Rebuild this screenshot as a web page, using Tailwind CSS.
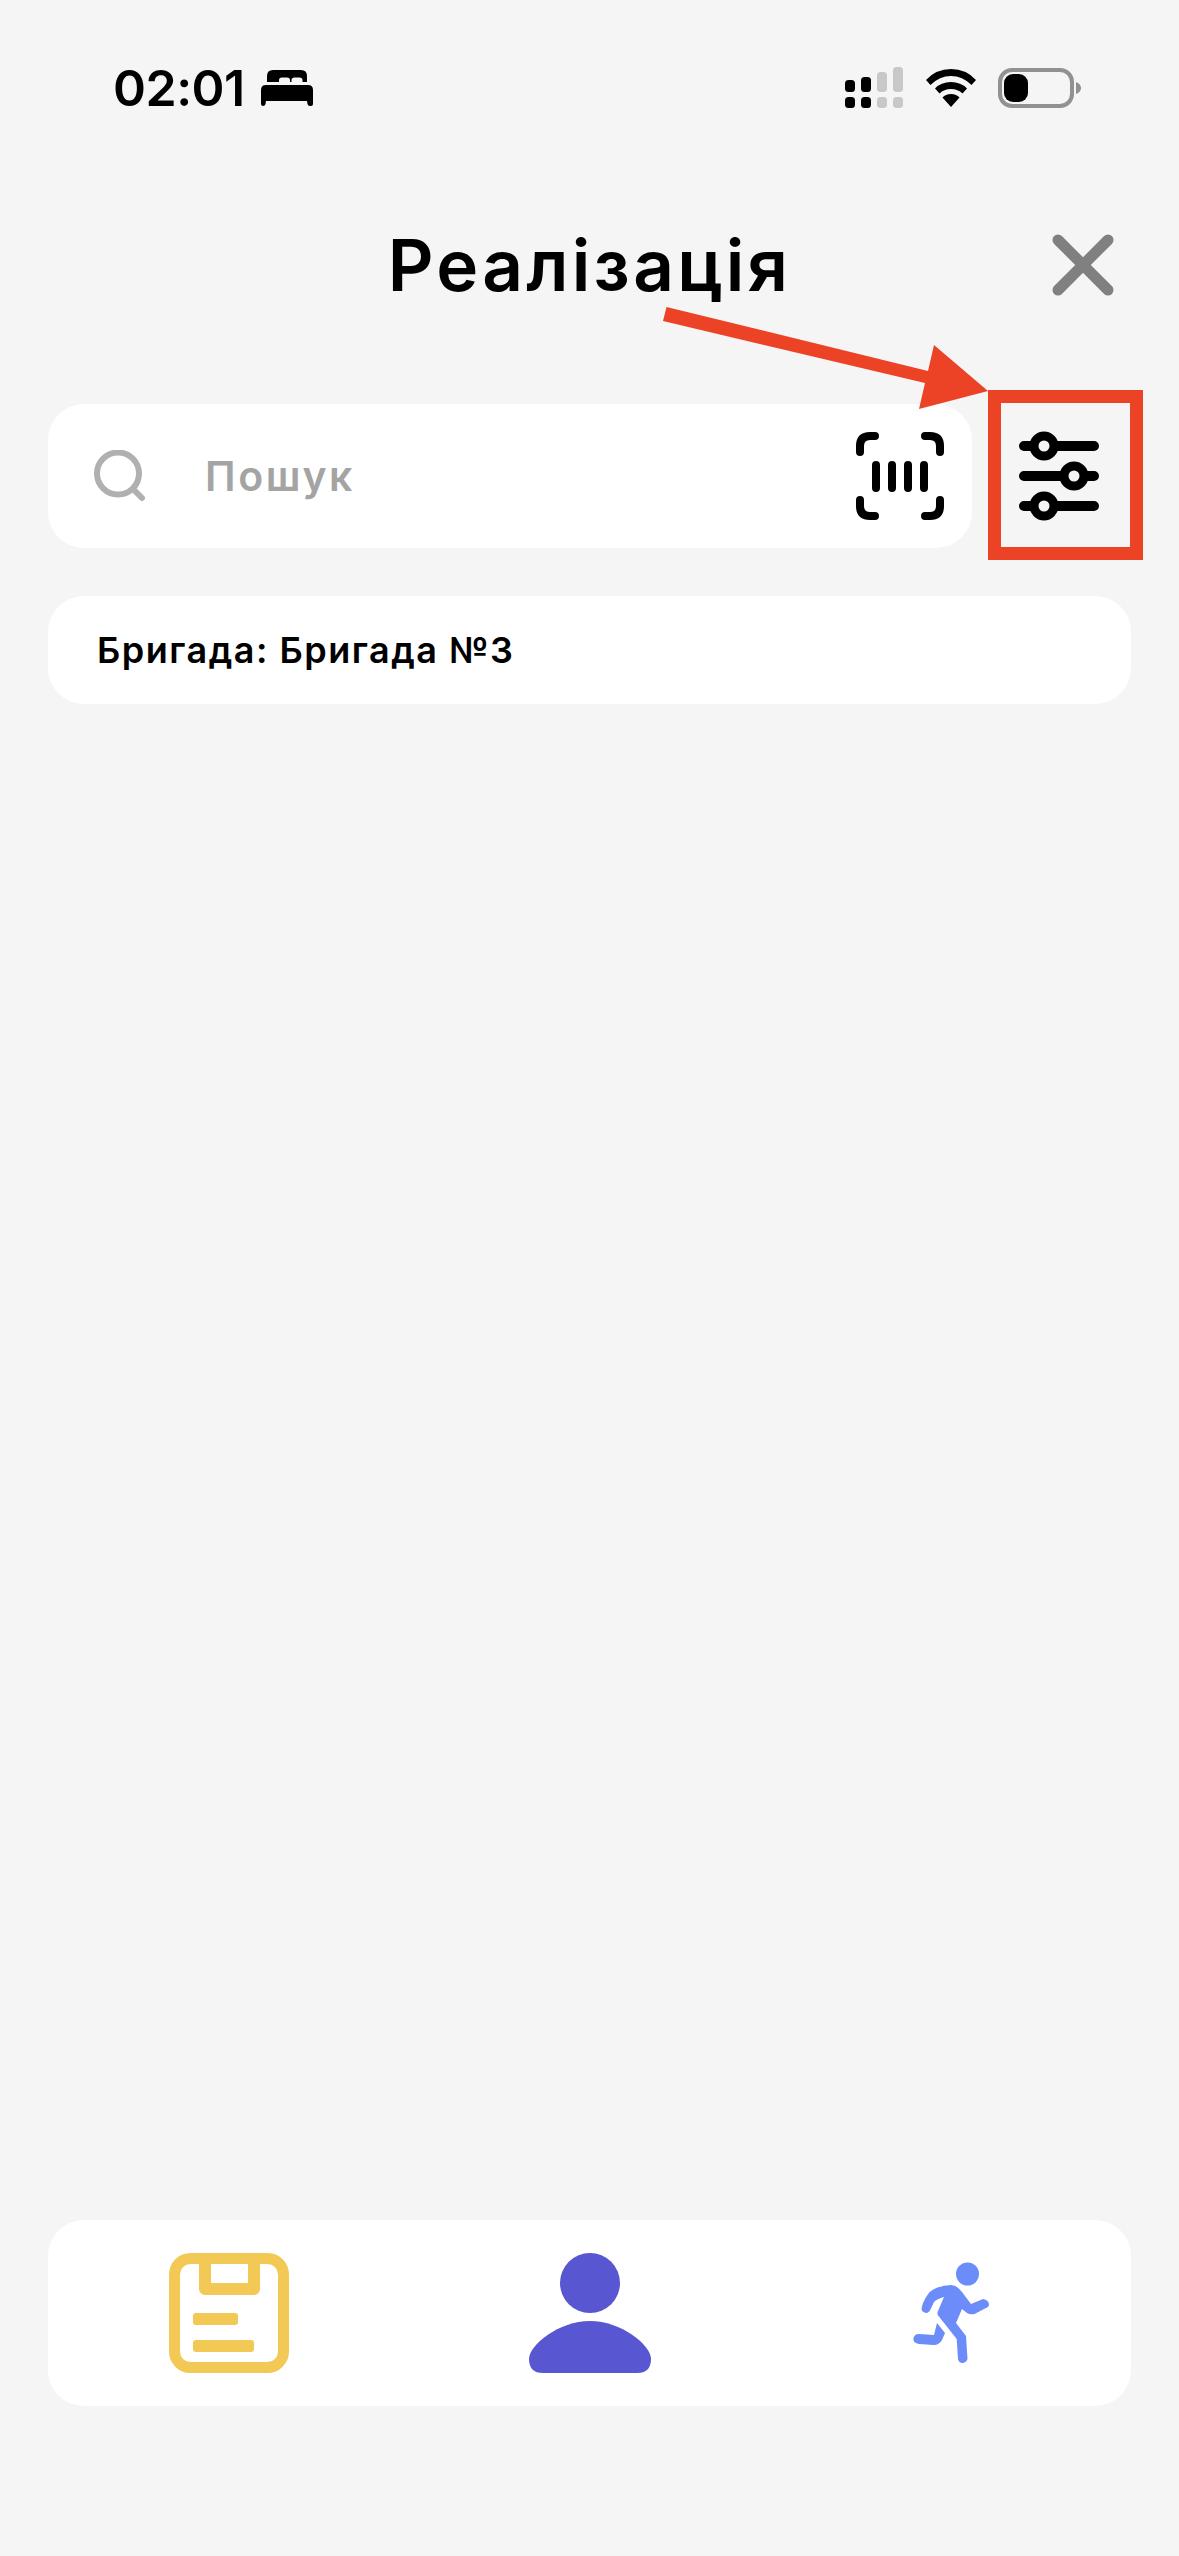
<!DOCTYPE html>
<html lang="uk">
<head>
<meta charset="utf-8">
<script src="https://cdn.jsdelivr.net/npm/@tailwindcss/browser@4"></script>
</head>
<body class="bg-[#f5f5f5]">
<div class="relative w-[1179px] h-[2556px] overflow-hidden flex flex-col bg-[#f5f5f5] font-['Inter',sans-serif] text-black">

  <!-- status bar -->
  <div class="h-[67px]"></div>
  <div class="h-[42px] flex items-center pl-[113px] pr-[98px]">
    <span class="text-[50px] leading-[42px] font-semibold tracking-[-0.5px]">02:01</span>
    <svg class="ml-[16px]" width="52" height="36" viewBox="0 0 52 36"><path fill="#000" d="M6 12V6q0-6 6-6h28q6 0 6 6v6h-4.500V10q0-2.500-3-2.500h-5q-3 0-3 2.500v2h-1.500V10q0-2.500-3-2.500h-5q-3 0-3 2.500v2zM5 15h42q5 0 5 5v14q0 2-2 2h-1q-2 0-2.500-2l-.500-3H5l-.500 3Q4 36 2 36H2q-2 0-2-2V20q0-5 5-5z"/></svg>
    <div class="flex-1"></div>
    <svg width="60" height="42" viewBox="0 0 60 42">
      <g fill="#000"><rect x="2" y="13" width="10" height="12" rx="3.500"/><rect x="18" y="10" width="10" height="15" rx="3.500"/><rect x="2" y="30" width="10" height="11" rx="3.500"/><rect x="18" y="30" width="10" height="11" rx="3.500"/></g>
      <g fill="#c8c8c8"><rect x="34" y="5" width="10" height="20" rx="3.500"/><rect x="50" y="0" width="10" height="25" rx="3.500"/><rect x="34" y="30" width="10" height="11" rx="3.500"/><rect x="50" y="30" width="10" height="11" rx="3.500"/></g>
    </svg>
    <svg class="ml-[23px]" width="50" height="38" viewBox="0 0 50 38"><path fill="#000" d="M25 0Q40 0 50 11l-4.500 5Q36.500 7 25 7 13.500 7 4.500 16L0 11Q10 0 25 0zM25 13q10 0 16 6.500l-4.500 5Q32 20 25 20q-7 0-11.500 4.500L9 19.500Q15 13 25 13zM25 25q5.500 0 8.500 3.500L25 38l-8.500-9.500Q19.500 25 25 25z"/></svg>
    <svg class="ml-[22px]" width="83" height="40" viewBox="0 0 83 40">
      <rect x="2" y="2" width="72" height="36" rx="12" fill="none" stroke="#919191" stroke-width="4"/>
      <rect x="6" y="6" width="24" height="28" rx="9" fill="#000"/>
      <path fill="#919191" d="M78 14q5 2 5 6t-5 6z"/>
    </svg>
  </div>

  <!-- header -->
  <div class="mt-[118px] h-[76px] px-[65px] grid grid-cols-[1fr_auto_1fr] items-center">
    <div></div>
    <h1 class="text-[71px] leading-[76px] font-semibold tracking-[3.300px]">Реалізація</h1>
    <div class="flex justify-end">
      <svg width="62" height="62" viewBox="0 0 62 62"><path d="M6 6 56 56M56 6 6 56" fill="none" stroke="#808080" stroke-width="11" stroke-linecap="round"/></svg>
    </div>
  </div>

  <!-- search row -->
  <div class="mt-[101px] pl-[48px] flex items-center">
    <div class="w-[924px] h-[144px] rounded-[36px] bg-white flex items-center pl-[46px] pr-[28px]">
      <svg width="52" height="52" viewBox="0 0 52 52"><circle cx="24" cy="23.500" r="21" fill="none" stroke="#b0b0b0" stroke-width="6"/><path d="M39 39 48 48" stroke="#b0b0b0" stroke-width="6" stroke-linecap="round"/></svg>
      <span class="ml-[59px] mt-[2px] text-[41px] font-semibold tracking-[2.600px] text-[#a4a4a4]">Пошук</span>
      <div class="flex-1"></div>
      <svg width="88" height="88" viewBox="0 0 88 88" fill="none" stroke="#000" stroke-width="8" stroke-linecap="round">
        <path d="M4 20V14Q4 4 14 4H19M69 4H74Q84 4 84 14V20M4 68V74Q4 84 14 84H19M69 84H74Q84 84 84 74V68"/>
        <path d="M20 33V56M36 33V56M52 33V56M68 33V56"/>
      </svg>
    </div>
    <svg class="ml-[47px]" width="80" height="90" viewBox="0 0 80 90">
      <g stroke="#000" stroke-width="10" stroke-linecap="round"><path d="M5 15H75M5 45H75M5 75H75"/></g>
      <g fill="#f5f5f5" stroke="#000" stroke-width="9"><circle cx="25" cy="15" r="10"/><circle cx="55" cy="45" r="10"/><circle cx="25" cy="75" r="10"/></g>
    </svg>
  </div>

  <!-- brigade -->
  <div class="mt-[48px] mx-[48px] h-[108px] rounded-[36px] bg-white flex items-center pl-[49px]">
    <span class="text-[36px] font-semibold tracking-[1.500px]">Бригада: Бригада №3</span>
  </div>

  <div class="flex-1"></div>

  <!-- bottom nav -->
  <div class="mb-[150px] mx-[48px] h-[186px] rounded-[36px] bg-white grid grid-cols-3 items-center justify-items-center">
    <svg width="120" height="120" viewBox="0 0 120 120" fill="none">
      <rect x="5.500" y="5.500" width="109" height="109" rx="16" stroke="#f2c955" stroke-width="11"/>
      <path d="M36 6V36H85V6" stroke="#f2c955" stroke-width="12" stroke-linejoin="round"/>
      <rect x="24" y="60" width="45" height="12" rx="3" fill="#f2c955"/>
      <rect x="24" y="87" width="61" height="12" rx="3" fill="#f2c955"/>
    </svg>
    <svg width="122" height="120" viewBox="0 0 122 120" fill="#5856d0">
      <circle cx="61" cy="30" r="30"/>
      <path d="M61 68C30 68 0 92 0 106Q0 120 14 120H108Q122 120 122 106C122 92 92 68 61 68z"/>
    </svg>
    <svg width="76" height="102" viewBox="912 2262 76 102" fill="#6b8cf9">
      <circle cx="966.500" cy="2274" r="11.500"/>
      <path d="M950.500 2285Q957 2286 961 2292L970 2304 982 2299Q988 2300 988 2305 988 2307 985 2308L973.500 2314Q969 2315 966 2313L961 2309 955 2323 965 2336 966.500 2359Q965 2363 961.300 2363 958 2363 957 2359L955.700 2339 937.500 2316Q936 2314 936.600 2312L943 2297Q936 2299 933 2302L929.700 2309Q928 2313 925 2313 920 2312 920.600 2308 922 2302 924.500 2298 929 2290 935.300 2288 943 2285 950.500 2285z"/>
      <path d="M936 2323 944 2333 941 2340Q938 2345 933 2345L918 2344Q912.300 2343 912.300 2339 913 2334 918 2334L933 2335z"/>
    </svg>
  </div>

  <!-- annotation -->
  <div class="absolute left-[988px] top-[390px] w-[155px] h-[170px] border-[13px] border-[#ec4225]"></div>
  <svg class="absolute left-0 top-0" width="1179" height="600" viewBox="0 0 1179 600"><path fill="#ec4225" d="M666.500 307 928 371 934 345 988 391 919 409 925 383 663 321z"/></svg>
</div>
</body>
</html>
